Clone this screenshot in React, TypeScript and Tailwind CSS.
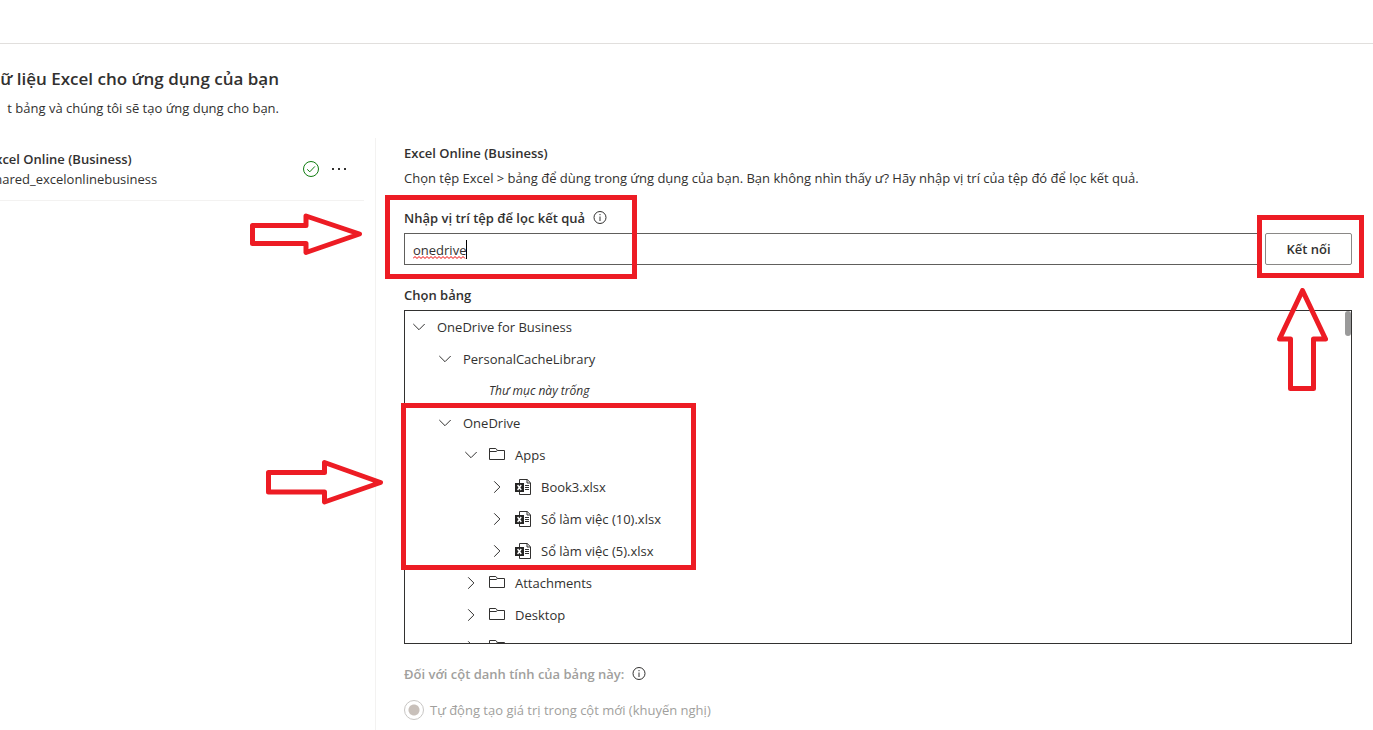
import React from "react";

type NodeKind = "site" | "folder" | "workbook" | "note";

interface TreeNode {
  id: string;
  label: string;
  kind: NodeKind;
  level: number;
  open?: boolean;
}

const nodes: TreeNode[] = [
  { id: "business", label: "OneDrive for Business", kind: "site", level: 0, open: true },
  { id: "cache", label: "PersonalCacheLibrary", kind: "site", level: 1, open: true },
  { id: "empty", label: "Thư mục này trống", kind: "note", level: 2 },
  { id: "onedrive", label: "OneDrive", kind: "site", level: 1, open: true },
  { id: "apps", label: "Apps", kind: "folder", level: 2, open: true },
  { id: "book3", label: "Book3.xlsx", kind: "workbook", level: 3 },
  { id: "book10", label: "Sổ làm việc (10).xlsx", kind: "workbook", level: 3 },
  { id: "book5", label: "Sổ làm việc (5).xlsx", kind: "workbook", level: 3 },
  { id: "attachments", label: "Attachments", kind: "folder", level: 2 },
  { id: "desktop", label: "Desktop", kind: "folder", level: 2 },
  { id: "documents", label: "Documents", kind: "folder", level: 2 },
];

const indent = ["pl-2", "pl-[34px]", "pl-[60px]", "pl-[86px]"];

function Chevron({ open }: { open?: boolean }) {
  return (
    <svg width="12" height="12" viewBox="0 0 12 12" fill="none" stroke="#323130" aria-hidden="true" className="shrink-0">
      <path d={open ? "M0.3 3L6 8.7L11.7 3" : "M3.2 0.3L8.9 6L3.2 11.7"} />
    </svg>
  );
}

function FolderIcon() {
  return (
    <svg width="16" height="16" viewBox="0 0 16 16" fill="none" stroke="#323130" aria-hidden="true" className="shrink-0">
      <path d="M0.5 12.5V1.5H6.8L8.6 3.5H15.5V12.5Z" />
      <path d="M0.5 4.5H7L8.6 3.5" />
    </svg>
  );
}

function WorkbookIcon() {
  return (
    <svg width="16" height="16" viewBox="0 0 16 16" fill="none" aria-hidden="true" className="shrink-0">
      <path d="M4.5 4V0.5H12.2L15.5 3.8V15.5H4.5V12" stroke="#323130" />
      <path d="M12 0.5V4H15.5" stroke="#323130" />
      <path d="M10 6.5H14M10 8.5H14M10 10.5H14" stroke="#323130" />
      <rect x="0" y="4" width="9" height="9" fill="#252423" />
      <path d="M2.6 6L6.2 11M6.2 6L2.6 11" stroke="#fff" strokeWidth="1.4" />
    </svg>
  );
}

function InfoIcon() {
  return (
    <svg width="14" height="14" viewBox="0 0 14 14" fill="none" stroke="#323130" role="img" aria-label="Thông tin" className="shrink-0">
      <circle cx="7" cy="6.5" r="6" />
      <path d="M7 5.5V10M7 3V4.2" />
    </svg>
  );
}

function RightArrow() {
  return (
    <svg width="118" height="46" viewBox="0 0 118 46" fill="none" stroke="#ed1c24" strokeWidth="5" strokeLinejoin="round" aria-hidden="true">
      <path d="M3.5 13.5H59.5V3.5L115.5 23.5L59.5 43V33H3.5Z" />
    </svg>
  );
}

function UpArrow() {
  return (
    <svg width="51" height="103" viewBox="0 0 51 103" fill="none" stroke="#ed1c24" strokeWidth="5" strokeLinejoin="round" aria-hidden="true">
      <path d="M25.5 2.5L48.5 51H36.5V100.5H13.5V51H2.5Z" />
    </svg>
  );
}

function TreeRow({ node }: { node: TreeNode }) {
  if (node.kind === "note") {
    return (
      <li className="flex h-8 items-center pl-[84px] text-xs italic">{node.label}</li>
    );
  }
  return (
    <li>
      <button type="button" aria-expanded={!!node.open} className={`flex h-8 w-full items-center text-left ${indent[node.level]}`}>
        <Chevron open={node.open} />
        <span className="ml-3 flex items-center gap-[10px]">
          {node.kind === "folder" && <FolderIcon />}
          {node.kind === "workbook" && <WorkbookIcon />}
          {node.label}
        </span>
      </button>
    </li>
  );
}

export default function App() {
  return (
    <div className="flex min-h-screen flex-col overflow-hidden bg-white font-['Open_Sans','Noto_Sans',sans-serif] text-[13px] leading-5 text-[#323130]">
      <header className="h-11 border-b border-[#e1dfdd]" />

      <div className="flex h-[94px] w-[279px] flex-col items-end self-start whitespace-nowrap pt-[23px]">
        <h1 className="text-[17px] font-semibold leading-6">ữ liệu Excel cho ứng dụng của bạn</h1>
        <p className="mt-[7px]">t bảng và chúng tôi sẽ tạo ứng dụng cho bạn.</p>
      </div>

      <div className="flex grow">
        <aside className="w-[375px] shrink-0 pr-[11px]">
          <div className="flex h-[63px] items-center border-b border-[#f3f2f1]">
            <div className="-ml-3 grow">
              <h2 className="font-semibold">Excel Online (Business)</h2>
              <p>shared_excelonlinebusiness</p>
            </div>
            <svg width="16" height="16" viewBox="0 0 16 16" fill="none" stroke="#107c10" role="img" aria-label="Đã kết nối">
              <circle cx="8" cy="8" r="7.5" />
              <path d="M4.2 8.3L6.8 10.8L11.9 5.4" />
            </svg>
            <button type="button" aria-label="Tùy chọn khác" className="ml-3 mr-4">
              <svg width="17" height="16" viewBox="0 0 17 16" fill="#323130" aria-hidden="true">
                <rect x="1" y="7" width="2" height="2" />
                <rect x="7" y="7" width="2" height="2" />
                <rect x="13" y="7" width="2" height="2" />
              </svg>
            </button>
          </div>
        </aside>

        <main className="min-w-0 grow border-l border-[#f3f2f1] pl-7 pr-[21px] pt-[5px]">
          <h2 className="font-semibold">Excel Online (Business)</h2>
          <p className="mt-[5px]">
            Chọn tệp Excel &gt; bảng để dùng trong ứng dụng của bạn. Bạn không nhìn thấy ư? Hãy nhập vị trí của tệp đó để lọc kết quả.
          </p>

          <div className="relative mt-5">
            <div className="flex items-center gap-2">
              <label htmlFor="location" className="font-semibold">Nhập vị trí tệp để lọc kết quả</label>
              <InfoIcon />
            </div>
            <div className="mt-[5px] flex gap-1">
              <div className="relative grow">
                <input
                  id="location"
                  type="text"
                  defaultValue="onedrive"
                  spellCheck={false}
                  className="h-8 w-full border border-[#605e5c] px-2 pt-px outline-none"
                />
                <svg width="56" height="20" viewBox="0 0 56 20" fill="none" aria-hidden="true" className="absolute left-[9px] top-[7px]">
                  <path
                    d="M0 18.5L2 16.5L4 18.5L6 16.5L8 18.5L10 16.5L12 18.5L14 16.5L16 18.5L18 16.5L20 18.5L22 16.5L24 18.5L26 16.5L28 18.5L30 16.5L32 18.5L34 16.5L36 18.5L38 16.5L40 18.5L42 16.5L44 18.5L46 16.5L48 18.5L50 16.5L52 18.5"
                    stroke="#f00000"
                  />
                  <path d="M53.5 0V19" stroke="#000" />
                </svg>
              </div>
              <div className="relative">
                <button type="button" className="h-8 w-[87px] rounded-xs border border-[#8a8886] font-semibold">
                  Kết nối
                </button>
                <div className="pointer-events-none absolute -left-2 -top-[18px] h-[63px] w-[107px] border-5 border-[#ed1c24]" />
                <div className="pointer-events-none absolute left-3 top-[55px] z-10">
                  <UpArrow />
                </div>
              </div>
            </div>
            <div className="pointer-events-none absolute -left-[19px] -top-[13px] h-[84px] w-[252px] border-5 border-[#ed1c24]" />
            <div className="pointer-events-none absolute -left-[156px] top-[3px]">
              <svg width="116" height="46" viewBox="0 0 116 46" fill="none" stroke="#ed1c24" strokeWidth="5" strokeLinejoin="round" aria-hidden="true">
                <path d="M4.5 14.5H58V5L111.5 23L58 41.5V32.5H4.5Z" />
              </svg>
            </div>
          </div>

          <h3 className="mt-5 font-semibold">Chọn bảng</h3>
          <div className="relative mt-[5px]">
            <div className="relative h-[334px] overflow-hidden border border-[#323130]">
              <ul>
                {nodes.map((node) => (
                  <TreeRow key={node.id} node={node} />
                ))}
              </ul>
              <div className="absolute right-0 top-0 h-[25px] w-[6px] rounded-full bg-[#9a9a9a]" />
            </div>
            <div className="pointer-events-none absolute -left-[3px] top-[93px] h-[167px] w-[295px] border-5 border-[#ed1c24]" />
            <div className="pointer-events-none absolute -left-[139px] top-[149px]">
              <RightArrow />
            </div>
          </div>

          <fieldset disabled className="mt-5 text-[#a19f9d]">
            <legend className="flex items-center gap-2 font-semibold">
              Đối với cột danh tính của bảng này:
              <InfoIcon />
            </legend>
            <label className="mt-4 flex items-center gap-[6px]">
              <input
                type="radio"
                name="identity"
                defaultChecked
                className="size-5 appearance-none rounded-full border border-[#c8c6c4] bg-[radial-gradient(circle,#c8c0ba_5px,transparent_6px)]"
              />
              Tự động tạo giá trị trong cột mới (khuyến nghị)
            </label>
          </fieldset>
        </main>
      </div>
    </div>
  );
}
